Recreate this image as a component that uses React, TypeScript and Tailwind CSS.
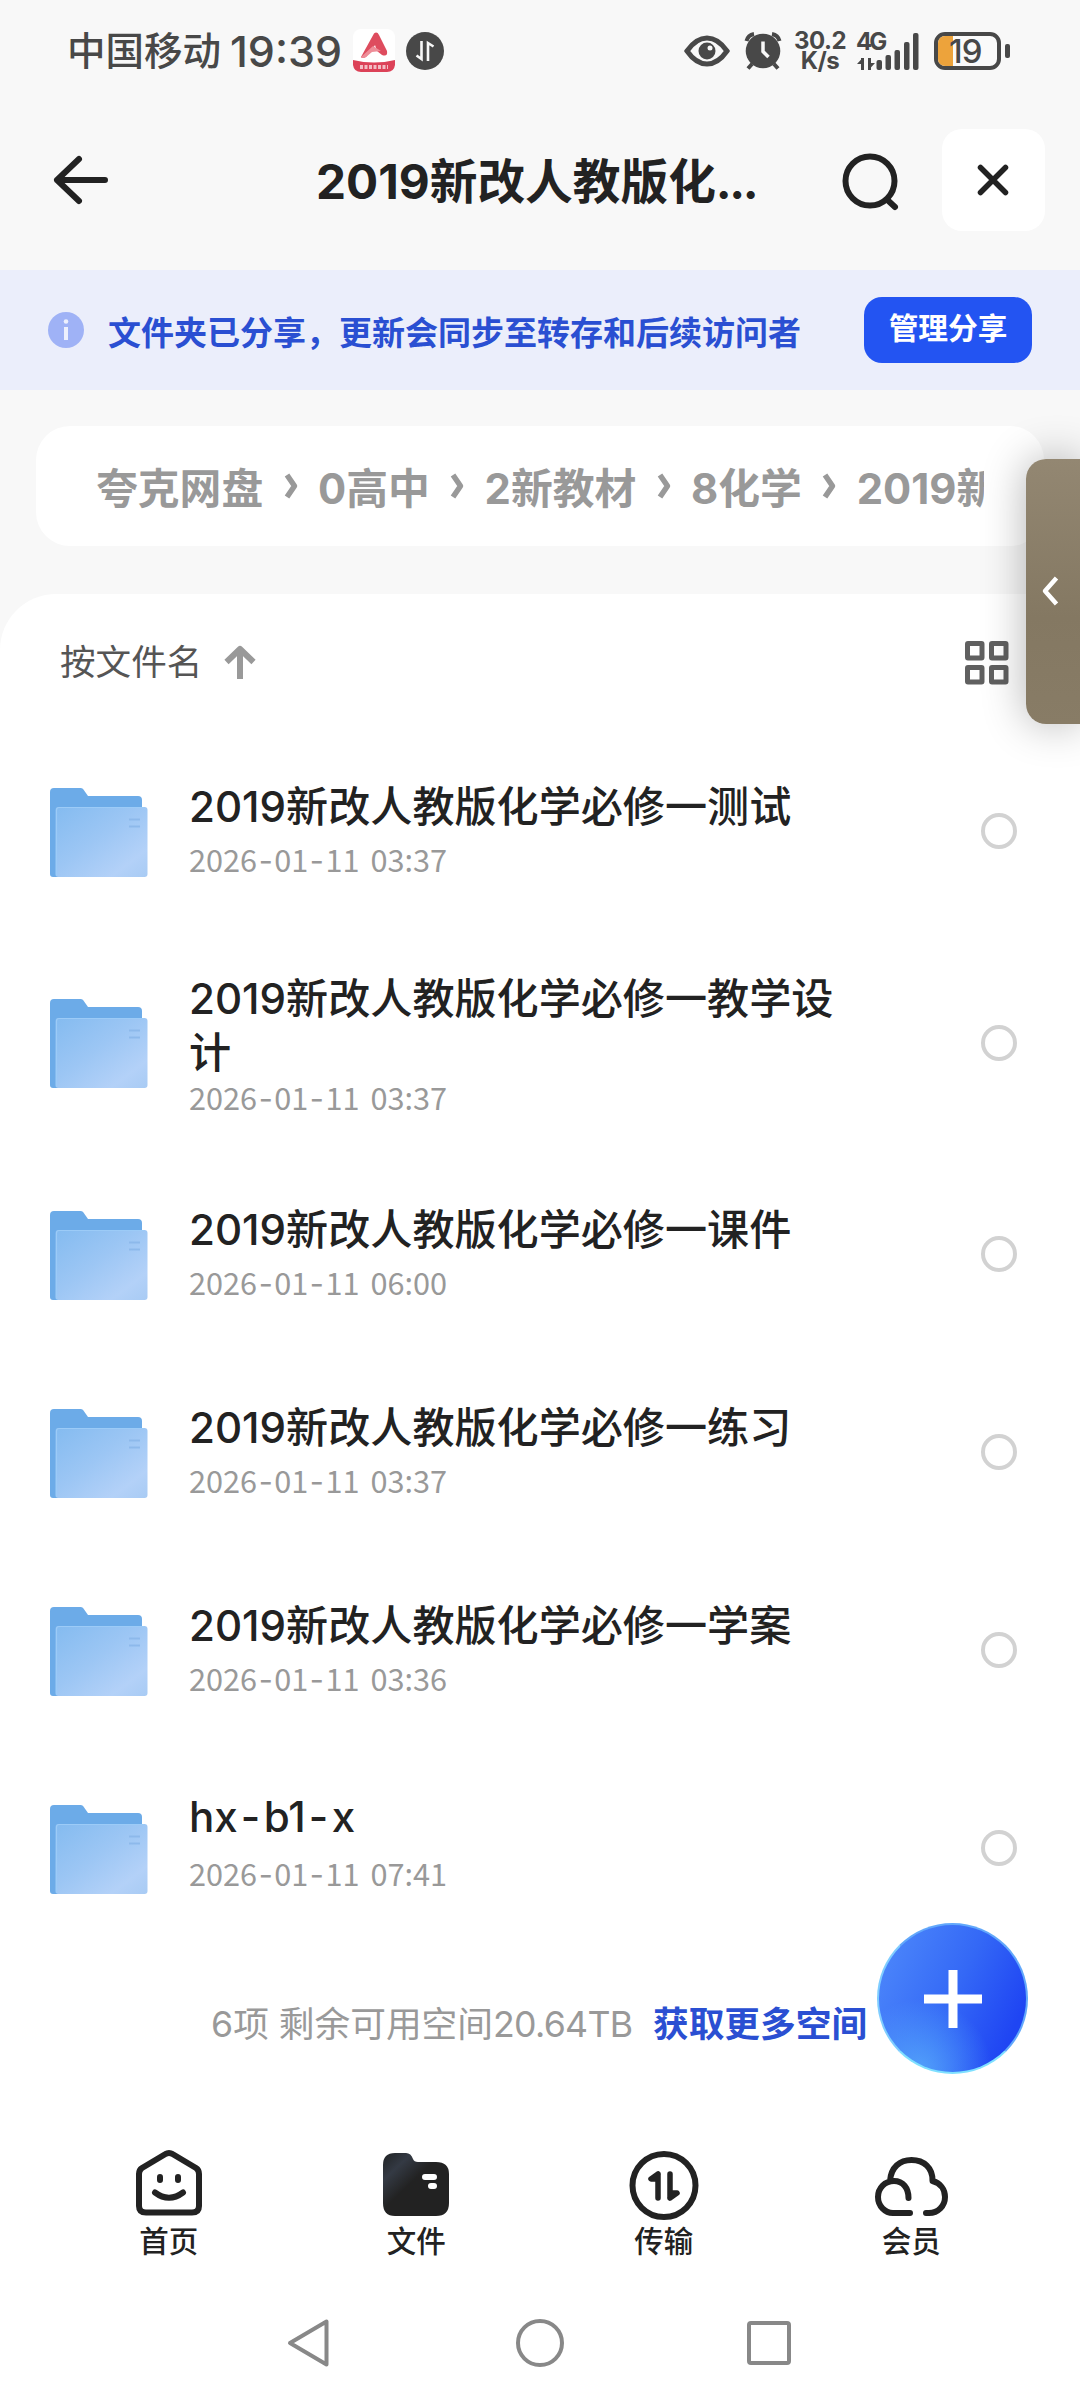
import React from 'react';

const LIST = [
  { name: '2019新改人教版化学必修一测试', date: '2026-01-11 03:37', row: 'h-[198px]', text: 'pt-[48px]', gap: 'mt-[5px]' },
  { name: '2019新改人教版化学必修一教学设计', date: '2026-01-11 03:37', row: 'h-[225px]', text: 'pt-[42px]', gap: 'mt-[-3px]' },
  { name: '2019新改人教版化学必修一课件', date: '2026-01-11 06:00', row: 'h-[198px]', text: 'pt-[48px]', gap: 'mt-[5px]' },
  { name: '2019新改人教版化学必修一练习', date: '2026-01-11 03:37', row: 'h-[198px]', text: 'pt-[48px]', gap: 'mt-[5px]' },
  { name: '2019新改人教版化学必修一学案', date: '2026-01-11 03:36', row: 'h-[198px]', text: 'pt-[48px]', gap: 'mt-[5px]' },
  { name: 'hx-b1-x', date: '2026-01-11 07:41', row: 'h-[198px]', text: 'pt-[41px]', gap: 'mt-[9px]' },
];

const CRUMBS = [
  { n: '', t: '夸克网盘' },
  { n: '0', t: '高中' },
  { n: '2', t: '新教材' },
  { n: '8', t: '化学' },
  { n: '2019', t: '新改人教版' },
];

/* Sets hyphens on their own tracking, wider than the surrounding glyphs. */
function Dashed({ text, dash }: { text: string; dash: string }) {
  return (
    <>
      {text.split('-').map((part, i) => (
        <React.Fragment key={i}>
          {i > 0 && <span className={dash}>-</span>}
          {part}
        </React.Fragment>
      ))}
    </>
  );
}

function StatusBar() {
  return (
    <div className="flex h-[102px] items-center pl-[67px] text-[#484848]">
      <span className="w-[163px] text-[38.5px] leading-none font-medium whitespace-nowrap">中国移动</span>
      <span className="w-[122px] text-[43px] leading-none font-medium">19:39</span>
      <svg width="44" height="44" viewBox="0 0 44 44">
        <rect x="1" y="0" width="42" height="43" rx="8" fill="#fff" />
        <path d="M1 31Q22 36 43 31V36Q42 43 35 43H9Q2 43 1 36Z" fill="#dc4258" />
        <path d="M9 28L22 4.500Q25 2 27 6L35 22Q36 28 30 26L25 22L23 16L20 21L14 28Q10 30 9 28Z" fill="#de4c5e" />
        <path d="M9 28L21 17L29 22L20 23L14 28Q10 30 9 28Z" fill="#ee8d98" />
        <path d="M8 38h28" stroke="#fff" strokeWidth="4" strokeDasharray="3 1.5" opacity=".65" />
      </svg>
      <svg className="ml-[9px]" width="40" height="40" viewBox="0 0 40 40">
        <circle cx="20" cy="20" r="19" fill="#484848" />
        <path d="M16.500 10V28L11.500 24.500M23 30V12L28.500 15.500" fill="none" stroke="#f8f8f8" strokeWidth="2.600" />
      </svg>
      <svg className="ml-[239px]" width="46" height="32" viewBox="0 0 46 32">
        <path d="M3 16Q12 3 23 3T43 16Q34 29 23 29T3 16Z" fill="none" stroke="#484848" strokeWidth="5" />
        <circle cx="23" cy="16" r="8.500" fill="#484848" />
        <circle cx="26" cy="13" r="2.500" fill="#f8f8f8" />
      </svg>
      <svg className="ml-[14px]" width="38" height="40" viewBox="0 0 38 40">
        <circle cx="19" cy="20" r="17.300" fill="#484848" />
        <path d="M2.500 10Q4 4 10 3M28 3Q34 4 35.500 10M8 33L4 37.500M30 33L34 37.500" fill="none" stroke="#484848" strokeWidth="4" />
        <path d="M19 10.500V20.500L24.500 26" fill="none" stroke="#f8f8f8" strokeWidth="3.500" />
      </svg>
      <div className="ml-[13px] flex w-[50px] flex-col items-center text-[24px] leading-[20px] font-bold tracking-[-0.5px]">
        <span>30.2</span>
        <span>K/s</span>
      </div>
      <div className="relative ml-[12px] h-[38px] w-[62px]">
        <svg className="block" width="62" height="38" viewBox="0 0 62 38">
          <path d="M5.500 26V38M12.500 26V38" stroke="#484848" strokeWidth="3" />
          <path d="M5.500 26L0 32H5.500ZM12.500 37L18 31H12.500Z" fill="#484848" />
          <rect x="19.500" y="28" width="5.500" height="10" rx="2" fill="#484848" />
          <rect x="28.500" y="23" width="5.500" height="15" rx="2" fill="#484848" />
          <rect x="37.500" y="18" width="5.500" height="20" rx="2" fill="#484848" />
          <rect x="47" y="10" width="5.500" height="28" rx="2" fill="#484848" />
          <rect x="56" y="1" width="5.500" height="37" rx="2" fill="#484848" />
        </svg>
        <span className="absolute top-0 left-[-1px] text-[24px] leading-[20px] font-bold tracking-[-3px]">4G</span>
      </div>
      <div className="relative ml-[15px] flex h-[38px] w-[67px] items-center overflow-hidden rounded-[11px] border-[4px] border-[#484848] bg-[#fafafa] pl-[11px]">
        <div className="absolute inset-y-0 left-0 w-[15px] bg-[#eda33b]" />
        <span className="relative text-[33px] leading-[30px] font-medium tracking-[-1px]">19</span>
      </div>
      <div className="ml-[4px] h-[14px] w-[5px] rounded-[2px] bg-[#484848]" />
    </div>
  );
}

function Header() {
  return (
    <div className="flex h-[168px] items-start pt-[27px] pl-[52px]">
      <svg className="mt-[25px]" width="58" height="52" viewBox="0 0 58 52" fill="none" stroke="#222" strokeWidth="6" strokeLinecap="round" strokeLinejoin="round">
        <path d="M27 5L5 26L27 47M5 26H53" />
      </svg>
      <h1 className="ml-[206px] w-[500px] text-[47.7px] leading-[106px] font-bold whitespace-nowrap text-[#222]">
        2019新改人教版化<span className="tracking-[-2.5px]">...</span>
      </h1>
      <svg className="mt-[22px] ml-[25px]" width="60" height="60" viewBox="0 0 60 60" fill="none" stroke="#222" strokeWidth="6" strokeLinecap="round">
        <circle cx="29" cy="30" r="24.500" />
        <path d="M47 49.500L54 56" />
      </svg>
      <button className="ml-[41px] flex h-[102px] w-[103px] items-center justify-center rounded-[20px] bg-white pr-[1px]">
        <svg width="34" height="34" viewBox="0 0 34 34" stroke="#222" strokeWidth="5.500" strokeLinecap="round">
          <path d="M4.500 4.500L29.500 29.500M29.500 4.500L4.500 29.500" />
        </svg>
      </button>
    </div>
  );
}

function Folder() {
  return (
    <svg className="mt-[3px] block shrink-0" width="98" height="90" viewBox="0 0 98 90">
      <defs>
        <linearGradient id="front" x1="0" y1="0" x2="1" y2="1">
          <stop offset="0" stopColor="#84bbf0" />
          <stop offset=".45" stopColor="#9cc6f4" />
          <stop offset=".8" stopColor="#b3d1f8" />
          <stop offset="1" stopColor="#a8cbf4" />
        </linearGradient>
      </defs>
      <path d="M0 4Q0 0 4 0H31Q33 0 34.500 3L38 8H88Q92 8 92 12V30L10 89H3Q0 89 0 86Z" fill="#6cabe8" />
      <rect x="5.500" y="19" width="92" height="70" rx="3" fill="url(#front)" />
      <path d="M6.500 88V22Q6.500 19.500 9 19.500H94" fill="none" stroke="#9ccbf7" strokeWidth="1.200" />
      <path d="M79 31.500h11M79 38.500h11" stroke="#8db9eb" strokeWidth="2" />
    </svg>
  );
}

function NavItem({ label, children }: { label: string; children: React.ReactNode }) {
  return (
    <div className="flex flex-col items-center">
      <svg className="block" width="76" height="76" viewBox="0 0 76 76" fill="none" stroke="#222" strokeWidth="6" strokeLinecap="round" strokeLinejoin="round">
        {children}
      </svg>
      <span className="text-[29.5px] leading-[40px] font-medium text-[#222]">{label}</span>
    </div>
  );
}

export default function App() {
  return (
    <div className="relative flex h-[2400px] w-[1080px] flex-col overflow-hidden bg-[#f8f8f8] font-['Inter','Noto_Sans_CJK_SC',sans-serif]">
      <StatusBar />
      <Header />
      <div className="flex h-[120px] items-center bg-[#ebeefb] pr-[48px] pl-[48px]">
        <svg width="36" height="36" viewBox="0 0 36 36">
          <circle cx="18" cy="18" r="18" fill="#9fb2f6" />
          <circle cx="18" cy="9.500" r="2.300" fill="#edf0fd" />
          <path d="M18 15V28" stroke="#edf0fd" strokeWidth="4" />
        </svg>
        <span className="mt-[6px] ml-[24px] text-[33px] leading-[48px] font-bold whitespace-nowrap text-[#2a4fd2]">文件夹已分享，更新会同步至转存和后续访问者</span>
        <button className="ml-auto h-[66px] w-[168px] rounded-[18px] bg-[#2354f2] pb-[4px] text-[29.7px] leading-[62px] font-bold text-white">管理分享</button>
      </div>
      <div className="mx-[36px] mt-[36px] flex h-[120px] items-center rounded-[34px] bg-white pl-[60px]">
        <div className="mt-[5px] flex w-[888px] items-center overflow-hidden text-[41.8px] leading-[60px] font-bold whitespace-nowrap text-[#999]">
          {CRUMBS.map((c, i) => (
            <React.Fragment key={c.t}>
              {i > 0 && (
                <svg className="mx-[19.4px] mt-[-5px] shrink-0" width="16" height="28" viewBox="0 0 16 28" fill="none" stroke="#999" strokeWidth="5.500" strokeLinejoin="round">
                  <path d="M4 3L11.500 14L4 25" />
                </svg>
              )}
              <span className="shrink-0">{c.n}{c.t}</span>
            </React.Fragment>
          ))}
        </div>
      </div>
      <main className="mt-[48px] flex grow flex-col rounded-tl-[56px] bg-white">
        <div className="flex h-[138px] items-center pr-[70px] pl-[60px]">
          <span className="text-[35.6px] leading-[50px] text-[#555]">按文件名</span>
          <svg className="ml-[21px] mt-[-2px]" width="34" height="36" viewBox="0 0 34 36" fill="none" stroke="#999" strokeWidth="6" strokeLinejoin="round">
            <path d="M17 35V6M3.500 18L17 5L30.500 18" />
          </svg>
          <svg className="ml-auto" width="46" height="46" viewBox="0 0 46 46" fill="none" stroke="#606060" strokeWidth="5" strokeLinejoin="round">
            <rect x="3.500" y="3.500" width="14.500" height="14.500" rx="0.500" />
            <rect x="27.500" y="3.500" width="14.500" height="14.500" rx="0.500" />
            <rect x="3.500" y="27.500" width="14.500" height="14.500" rx="0.500" />
            <rect x="27.500" y="27.500" width="14.500" height="14.500" rx="0.500" />
          </svg>
        </div>
        {LIST.map((f) => (
          <div key={f.name} className={`flex items-center pr-[63px] pl-[50px] ${f.row}`}>
            <Folder />
            <div className={`ml-[41px] h-full w-[650px] ${f.text}`}>
              <div className="text-[42.1px] leading-[54px] font-medium break-all text-[#222]">
                <Dashed text={f.name} dash="px-[3px] tracking-[0.5px]" />
              </div>
              <div className={`font-['Noto_Sans_CJK_SC',sans-serif] text-[30.7px] leading-[40px] whitespace-nowrap text-[#999] [word-spacing:4px] ${f.gap}`}>
                <Dashed text={f.date} dash="px-[1.5px] font-['Inter'] leading-none" />
              </div>
            </div>
            <div className="ml-auto h-[36px] w-[36px] rounded-full border-[4px] border-[#d2d2d2]" />
          </div>
        ))}
        <div className="flex h-[153px] items-center pl-[211px] text-[35.7px] leading-[50px] whitespace-nowrap">
          <span className="w-[442px] text-[#999]">6项 剩余可用空间<span className="tracking-[-0.7px]">20.64TB</span></span>
          <span className="font-bold text-[#2a4fd2]">获取更多空间</span>
        </div>
        <nav className="mt-[45px] grid h-[155px] grid-cols-4 px-[45px]">
          <NavItem label="首页">
            <path d="M38 8Q40 8 41.500 9L65 23Q68 25 68 29V61Q68 67.500 61 67.500H15Q8 67.500 8 61V29Q8 25 11 23L34.500 9Q36 8 38 8Z" />
            <path d="M29 32V35M47 32V35" />
            <path d="M24 47.500Q38 58 52 47.500" />
          </NavItem>
          <NavItem label="文件">
            <defs>
              <linearGradient id="tab" x1="0" y1="0" x2="1" y2="1">
                <stop offset="0" stopColor="#202224" />
                <stop offset=".22" stopColor="#343a44" />
                <stop offset=".45" stopColor="#222" />
              </linearGradient>
            </defs>
            <path d="M17 8H28Q33 8 35 14Q36 17 40 17H58Q71 17 71 29V58Q71 71 58 71H17Q5 71 5 58V20Q5 8 17 8Z" fill="url(#tab)" stroke="none" />
            <path d="M47 32H56M53 41H56" stroke="#fff" />
          </NavItem>
          <NavItem label="传输">
            <circle cx="38" cy="40.500" r="31.500" />
            <path d="M32 29V53M32 29L25 34H32M44 29V53M44 53L51 48H44" strokeWidth="5.500" />
          </NavItem>
          <NavItem label="会员">
            <path d="M37 68H20C12 68 5 61 5 52C5 43 12 36 21 36C30 36 35.500 43 35.500 53M17 36C18 22 27 15 38.500 15C51 15 60 23 59.500 36C67 38 72 44 72 52C72 61 65 68 56 68H53" />
          </NavItem>
        </nav>
        <div className="mt-[-14px] flex grow items-center pl-[286px]">
          <svg width="46" height="52" viewBox="0 0 46 52" fill="none" stroke="#888" strokeWidth="4" strokeLinejoin="round">
            <path d="M4 26L40.500 4.500V47.500Z" />
          </svg>
          <div className="ml-[184px] h-[48px] w-[48px] rounded-full border-[4px] border-[#888]" />
          <div className="ml-[183px] h-[44px] w-[44px] rounded-[4px] border-[4px] border-[#888]" />
        </div>
      </main>
      <button className="absolute top-[1923px] left-[877px] flex h-[151px] w-[151px] items-center justify-center rounded-full border-[2px] border-[#62a8fb] border-b-[#7fe0ff] border-l-[#7fcdff] bg-[radial-gradient(circle_at_28%_100%,rgba(92,180,252,0.75)_0%,rgba(76,134,250,0)_40%),linear-gradient(115deg,#4a84fa_10%,#3468f6_50%,#1f45f3_85%)]">
        <svg width="58" height="58" viewBox="0 0 58 58" stroke="#fff" strokeWidth="9">
          <path d="M29 0V58M0 29H58" />
        </svg>
      </button>
      <div className="absolute top-[459px] right-0 flex h-[265px] w-[54px] items-center rounded-l-[20px] bg-[linear-gradient(180deg,#938772,#847862_60%,#887c66)] pl-[14px] shadow-[0_0_44px_rgba(0,0,0,0.3)]">
        <svg className="mt-[-2px]" width="20" height="32" viewBox="0 0 20 32" fill="none" stroke="#fff" strokeWidth="4.500" strokeLinejoin="round">
          <path d="M16.500 3L5 16L16.500 29" />
        </svg>
      </div>
    </div>
  );
}
